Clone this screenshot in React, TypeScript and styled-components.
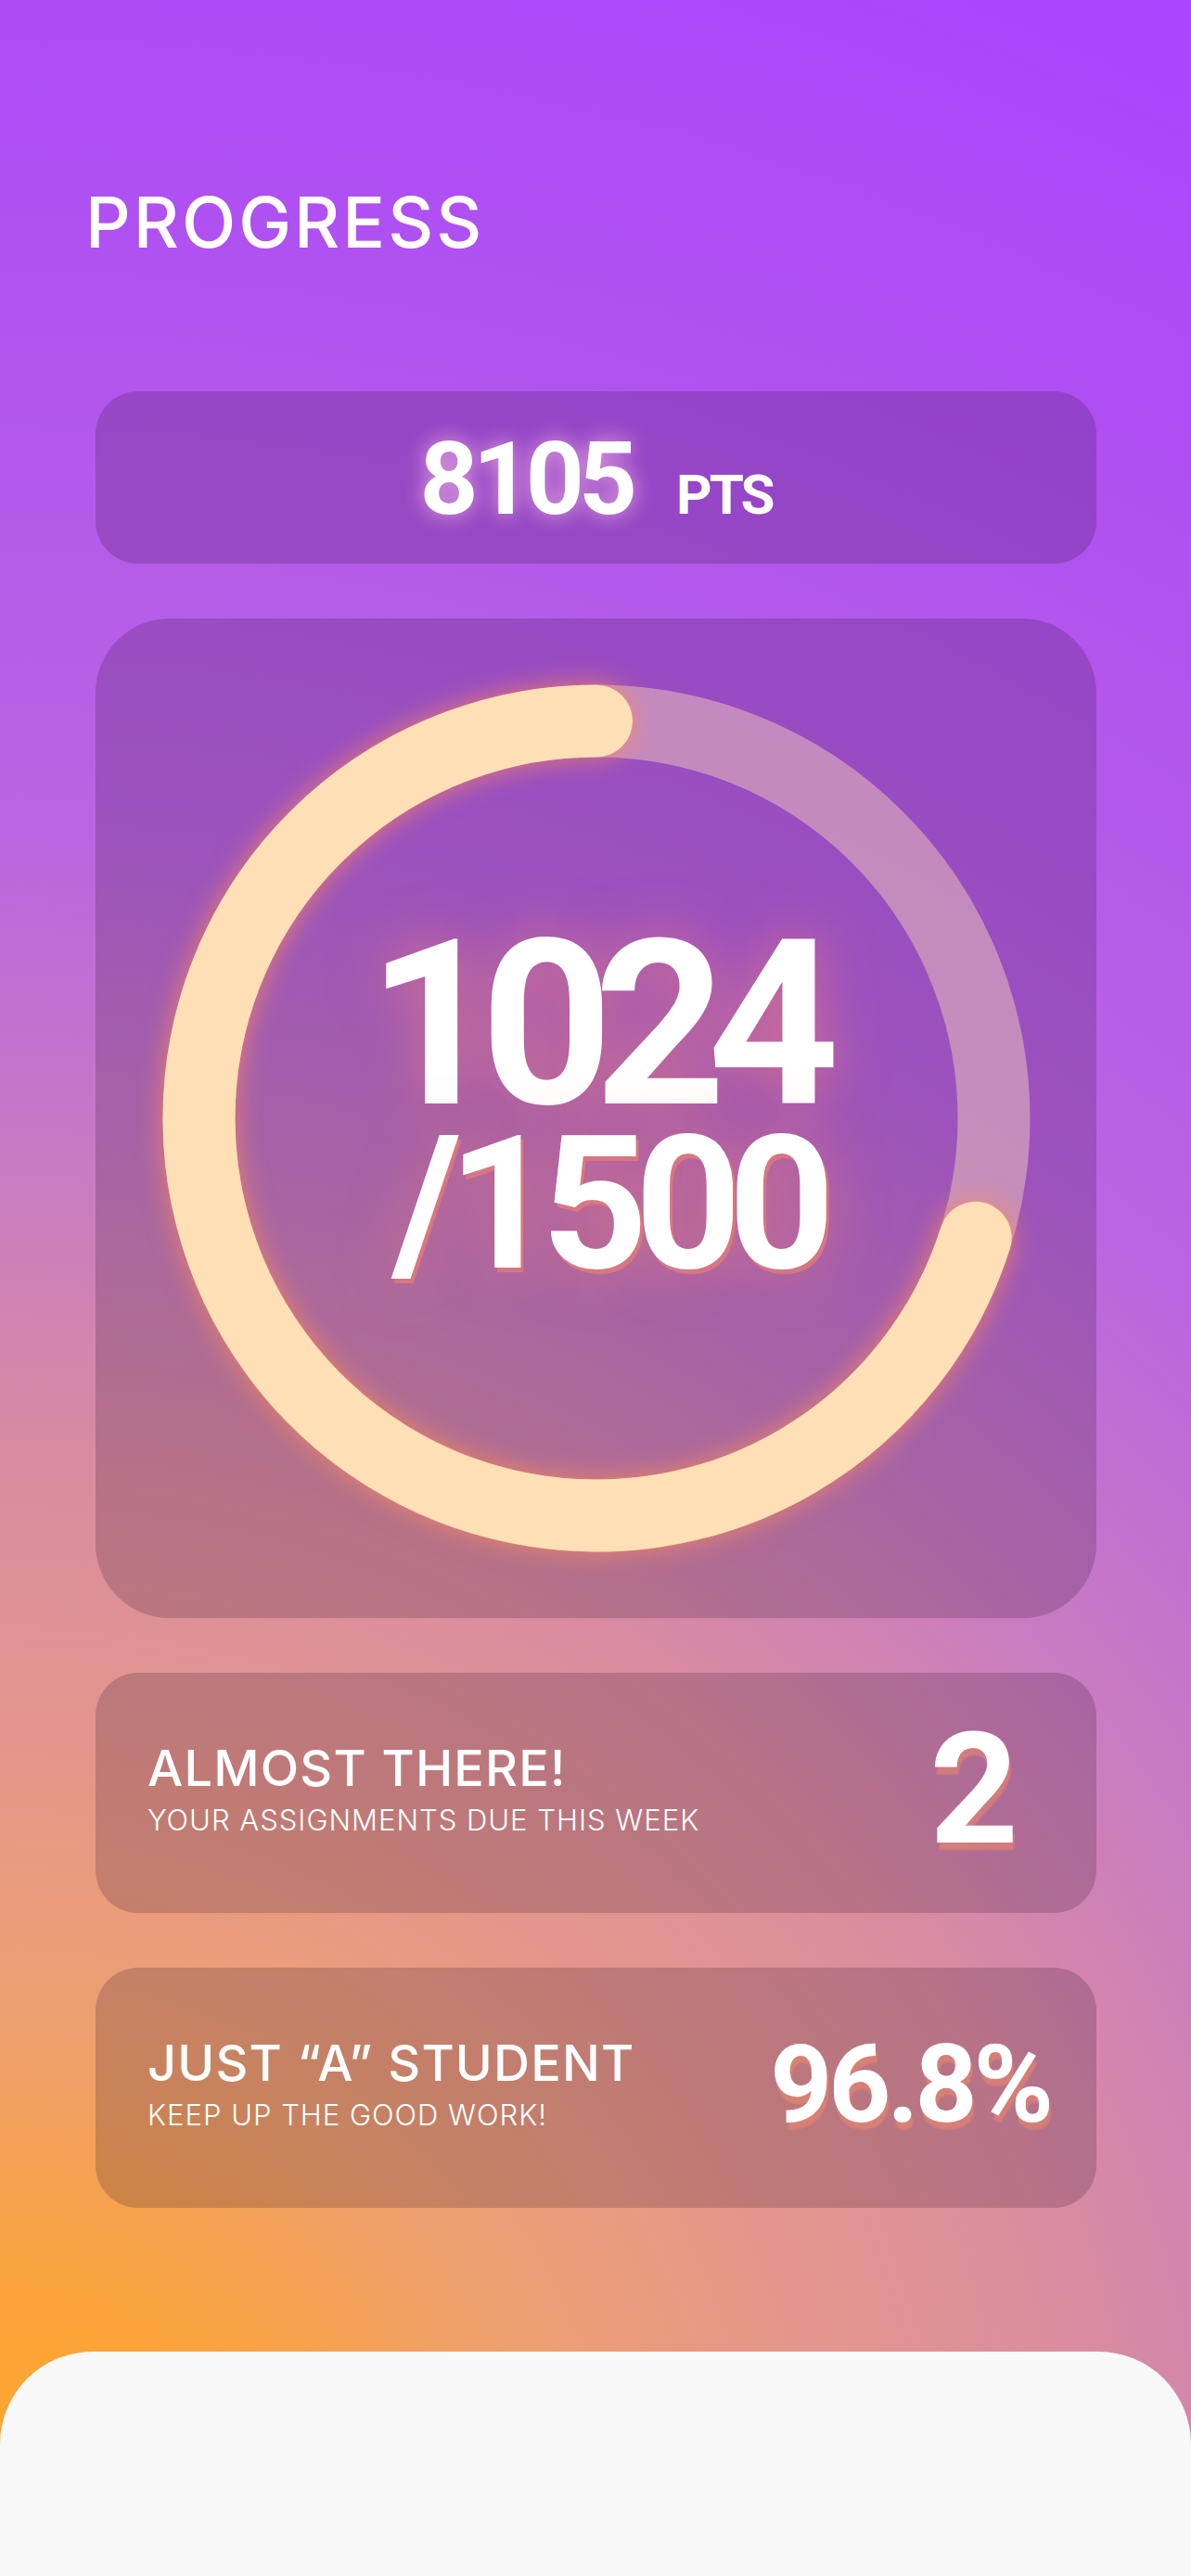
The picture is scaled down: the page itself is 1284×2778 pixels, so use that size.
import React from "react";
import styled, { createGlobalStyle } from "styled-components";

const GlobalStyle = createGlobalStyle`
  html, body {
    margin: 0;
    padding: 0;
    background: #f8f8f8;
  }
  * { box-sizing: border-box; }
`;

const Page = styled.div`
  width: 1284px;
  height: 2778px;
  overflow: hidden;
  display: flex;
  flex-direction: column;
  background: radial-gradient(
    circle at 0% 100%,
    #ffa726 0px,
    #fba43a 300px,
    #eea070 600px,
    #e4968c 900px,
    #d98ca0 1200px,
    #c97cc0 1500px,
    #b964e2 1900px,
    #b052f0 2500px,
    #aa44ff 3060px
  );
  font-family: Inter, "Noto Sans", sans-serif;
  color: #ffffff;
`;

const Title = styled.h1`
  margin: 201px 0 0 92px;
  font-family: Inter, "Noto Sans", sans-serif;
  font-weight: 500;
  font-size: 76px;
  line-height: 76px;
  letter-spacing: 3px;
`;

const Content = styled.main`
  margin-top: 145px;
  padding: 0 102px 0 103px;
  display: flex;
  flex-direction: column;
  gap: 59px;
`;

const Card = styled.section<{ $height: number; $radius: number }>`
  height: ${(p) => p.$height}px;
  border-radius: ${(p) => p.$radius}px;
  background: rgba(30, 5, 30, 0.19);
`;

const PointsCard = styled(Card)`
  display: flex;
  align-items: baseline;
  justify-content: center;
  gap: 48px;
  padding-top: 40px;
`;

const PointsValue = styled.span`
  font-family: Roboto, "Noto Sans", sans-serif;
  font-weight: 700;
  font-size: 110px;
  line-height: 110px;
  letter-spacing: -6px;
  text-shadow: 0 0 22px rgba(255, 200, 235, 0.75);
`;

const PointsUnit = styled.span`
  font-family: Roboto, "Noto Sans", sans-serif;
  font-weight: 700;
  font-size: 60px;
  line-height: 60px;
  letter-spacing: -3px;
`;

const RingCard = styled(Card)`
  display: grid;
  place-items: center;
`;

const RingStack = styled.div`
  display: grid;
  place-items: center;
  width: 1000px;
  height: 1000px;
  & > * {
    grid-area: 1 / 1;
  }
`;

const RingSvg = styled.svg`
  width: 1000px;
  height: 1000px;
  overflow: visible;
`;

const ArcPath = styled.path`
  filter: drop-shadow(0 0 14px rgba(255, 140, 90, 0.75));
`;

const RingLabel = styled.div`
  display: flex;
  flex-direction: column;
  align-items: center;
  margin: 0 0 0 24px;
  font-family: Roboto, "Noto Sans", sans-serif;
  font-weight: 700;
`;

const Current = styled.span`
  margin-right: 28px;
  font-size: 248px;
  line-height: 186px;
  letter-spacing: -20px;
  text-shadow: 0 0 60px rgba(255, 140, 110, 0.55);
`;

const Total = styled.span`
  font-size: 200px;
  line-height: 200px;
  letter-spacing: -14px;
  text-shadow: 3px 5px 0 rgba(225, 125, 120, 0.75),
    0 0 60px rgba(255, 140, 110, 0.5);
`;

const StatCard = styled(Card)<{ $valueInset: number }>`
  display: flex;
  align-items: center;
  justify-content: space-between;
  padding: 0 ${(p) => p.$valueInset}px 6px 56px;
`;

const StatText = styled.div`
  display: flex;
  flex-direction: column;
`;

const StatTitle = styled.span`
  font-family: Inter, "Noto Sans", sans-serif;
  font-weight: 500;
  font-size: 54px;
  line-height: 58px;
  letter-spacing: 1.2px;
`;

const StatCaption = styled.span`
  margin-top: 7px;
  font-family: Inter, "Noto Sans", sans-serif;
  font-weight: 300;
  font-size: 31px;
  line-height: 40px;
  letter-spacing: 1px;
`;

const StatValue = styled.span<{ $size: number }>`
  font-family: Roboto, "Noto Sans", sans-serif;
  font-weight: 700;
  font-size: ${(p) => p.$size}px;
  line-height: 1;
  letter-spacing: -4px;
  text-shadow: 2px 8px 2px rgba(235, 135, 110, 0.6);
`;

const Sheet = styled.div`
  margin-top: auto;
  height: 242px;
  flex-shrink: 0;
  background: #f8f8f8;
  border-radius: 100px 100px 0 0;
`;

const SIZE = 1000;
const C = SIZE / 2;
const R = 428.5;
const STROKE = 78;
const ringFraction = 0.7014;

function arcPath(fraction: number) {
  const theta = fraction * 2 * Math.PI;
  const x = C - R * Math.sin(theta);
  const y = C - R * Math.cos(theta);
  const large = fraction > 0.5 ? 1 : 0;
  return `M ${C} ${C - R} A ${R} ${R} 0 ${large} 0 ${x.toFixed(2)} ${y.toFixed(2)}`;
}

function ProgressRing() {
  return (
    <RingSvg viewBox={`0 0 ${SIZE} ${SIZE}`}>
      <circle
        cx={C}
        cy={C}
        r={R}
        fill="none"
        stroke="rgba(255, 223, 185, 0.42)"
        strokeWidth={STROKE}
      />
      <ArcPath
        d={arcPath(ringFraction)}
        fill="none"
        stroke="#ffdfb5"
        strokeWidth={STROKE}
        strokeLinecap="round"
      />
    </RingSvg>
  );
}

const stats = [
  {
    title: "ALMOST THERE!",
    caption: "YOUR ASSIGNMENTS DUE THIS WEEK",
    value: "2",
    size: 167,
    inset: 88,
  },
  {
    title: "JUST \u201CA\u201D STUDENT",
    caption: "KEEP UP THE GOOD WORK!",
    value: "96.8%",
    size: 117,
    inset: 50,
  },
];

export default function App() {
  return (
    <>
      <GlobalStyle />
      <Page>
        <Title>PROGRESS</Title>
        <Content>
          <PointsCard $height={186} $radius={46}>
            <PointsValue>8105</PointsValue>
            <PointsUnit>PTS</PointsUnit>
          </PointsCard>
          <RingCard $height={1078} $radius={80}>
            <RingStack>
              <ProgressRing />
              <RingLabel>
                <Current>1024</Current>
                <Total>/1500</Total>
              </RingLabel>
            </RingStack>
          </RingCard>
          {stats.map((s) => (
            <StatCard key={s.title} $height={259} $radius={46} $valueInset={s.inset}>
              <StatText>
                <StatTitle>{s.title}</StatTitle>
                <StatCaption>{s.caption}</StatCaption>
              </StatText>
              <StatValue $size={s.size}>{s.value}</StatValue>
            </StatCard>
          ))}
        </Content>
        <Sheet />
      </Page>
    </>
  );
}
